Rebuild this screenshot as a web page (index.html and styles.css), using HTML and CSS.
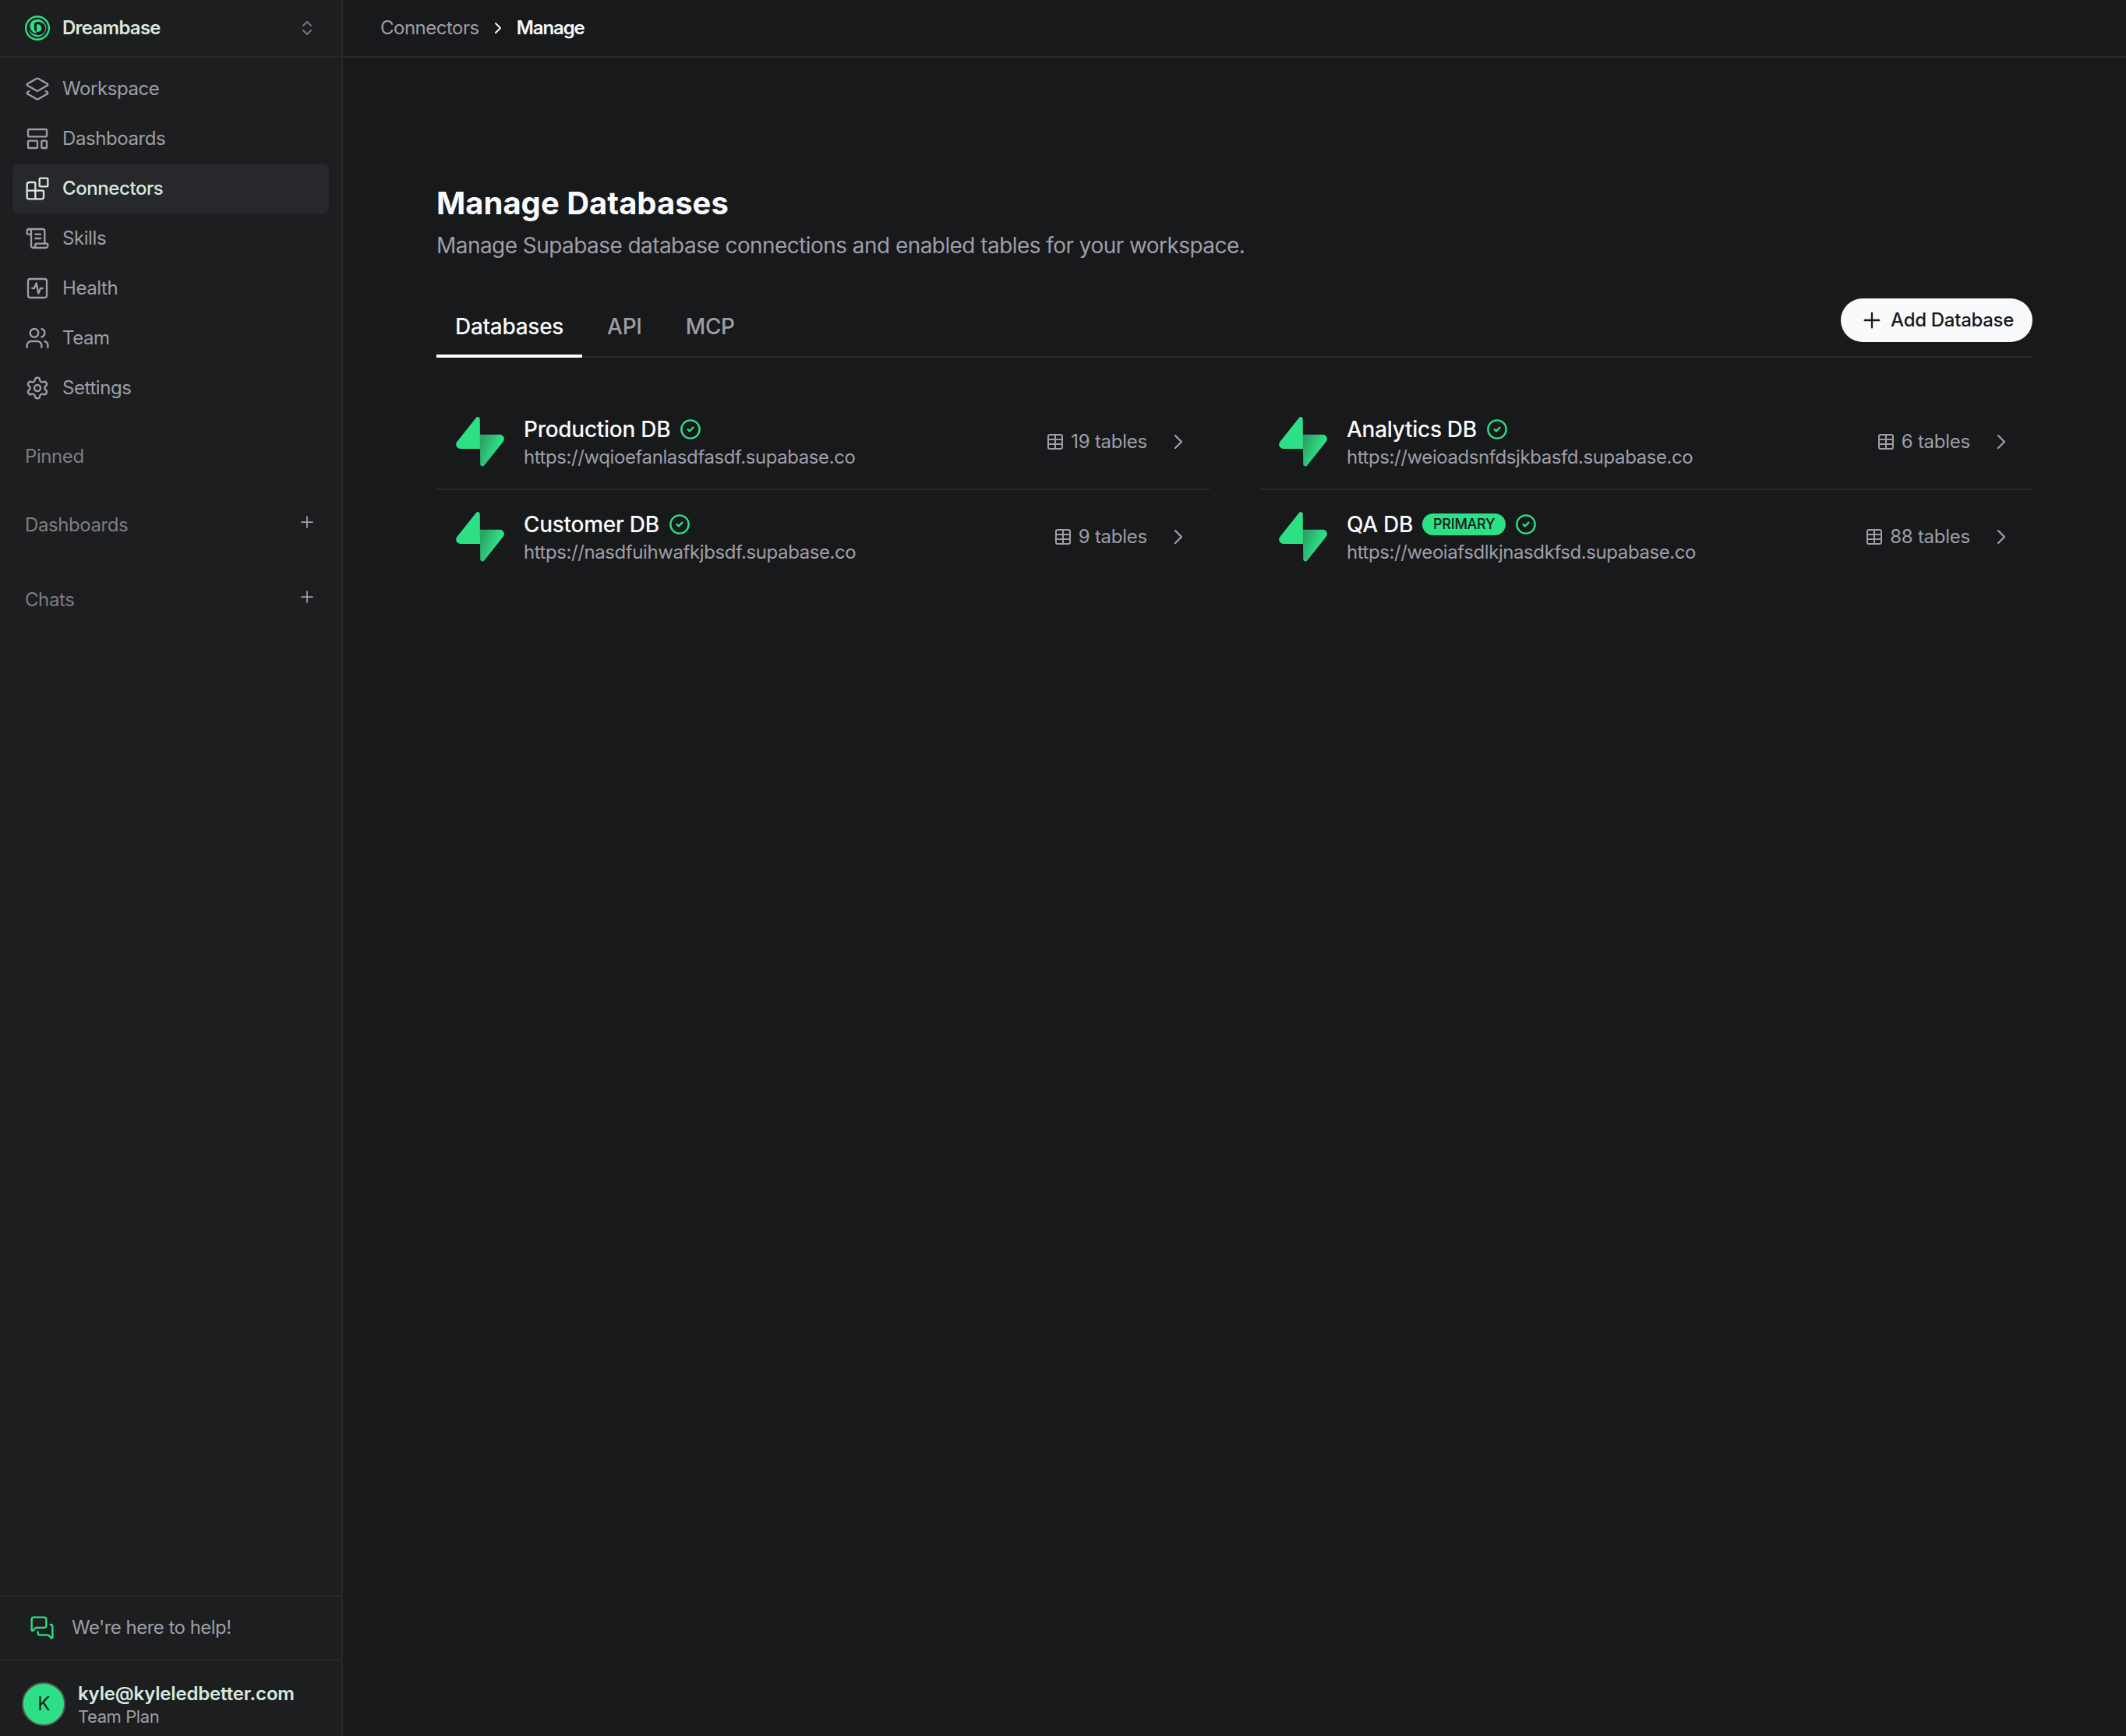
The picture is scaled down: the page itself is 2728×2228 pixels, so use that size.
FILE: index.html
```html
<!DOCTYPE html>
<html lang="en">
<head>
    <meta charset="UTF-8">
    <title>Dreambase - Manage Databases</title>
    <link rel="stylesheet" href="styles.css">
</head>
<body>
    <!-- shared icons -->
    <svg class="sprite" xmlns="http://www.w3.org/2000/svg">
        <symbol id="bolt" viewBox="0 0 109 113">
            <path d="M63.708 110.284c-2.86 3.601-8.658 1.628-8.727-2.97l-1.007-67.251h45.22c8.19 0 12.758 9.46 7.665 15.874l-43.151 54.347Z" fill="url(#bolt-shade)"/>
            <path d="M45.317 2.071c2.86-3.601 8.657-1.628 8.726 2.97l.442 67.251H9.83c-8.19 0-12.759-9.46-7.665-15.875L45.317 2.072Z" fill="#2ee085"/>
        </symbol>
        <linearGradient id="bolt-shade" x1="58" y1="58" x2="94" y2="73" gradientUnits="userSpaceOnUse">
            <stop offset="0" stop-color="#2ca567"/>
            <stop offset="1" stop-color="#2ee085"/>
        </linearGradient>
        <symbol id="check" viewBox="0 0 24 24"><circle cx="12" cy="12" r="10"/><path d="m9 12 2 2 4-4"/></symbol>
        <symbol id="table" viewBox="0 0 24 24"><path d="M12 3v18"/><rect width="18" height="18" x="3" y="3" rx="2"/><path d="M3 9h18M3 15h18"/></symbol>
        <symbol id="chevron" viewBox="0 0 24 24"><path d="m9 18 6-6-6-6"/></symbol>
        <symbol id="plus" viewBox="0 0 24 24"><path d="M5 12h14M12 5v14"/></symbol>
    </svg>

    <div class="app">
        <aside class="sidebar">
            <div class="workspace">
                <svg class="logo" viewBox="0 0 32 32">
                    <circle cx="16" cy="16" r="14.8" fill="none" stroke="#2ee085" stroke-width="2.4"/>
                    <path d="M5 17.5C6 23 10.5 27.2 16 27.2A11.2 11.2 0 1 0 8.2 8A9.5 9.5 0 0 0 14.5 22.8V20.8C12.5 20 12 18.5 12 16.5V10.5C13.5 8.3 15.500 7.8 17 8A8.600 8.600 0 1 1 15 24.700C10.500 24.500 7 21.500 5 17.500Z" fill="#2ee085"/>
                    <path d="M15 11.2H16.5A4.9 4.9 0 0 1 16.5 21H15Z" fill="#2ee085"/>
                </svg>
                <span class="workspace-name">Dreambase</span>
                <svg class="icon sm bold updown" viewBox="0 0 24 24"><path d="m7 15 5 5 5-5"/><path d="m7 9 5-5 5 5"/></svg>
            </div>
            <nav class="nav">
                <a class="nav-item">
                    <svg class="icon" viewBox="0 0 24 24"><path d="M13 13.74a2 2 0 0 1-2 0L2.5 8.87a1 1 0 0 1 0-1.74L11 2.26a2 2 0 0 1 2 0l8.5 4.87a1 1 0 0 1 0 1.74z"/><path d="m20 14.285 1.5.845a1 1 0 0 1 0 1.74L13 21.74a2 2 0 0 1-2 0l-8.5-4.87a1 1 0 0 1 0-1.74l1.5-.845"/></svg>
                    <span>Workspace</span>
                </a>
                <a class="nav-item">
                    <svg class="icon" viewBox="0 0 24 24"><rect width="18" height="7" x="3" y="3" rx="1"/><rect width="9" height="7" x="3" y="14" rx="1"/><rect width="5" height="7" x="16" y="14" rx="1"/></svg>
                    <span>Dashboards</span>
                </a>
                <a class="nav-item active">
                    <svg class="icon" viewBox="0 0 24 24"><path d="M10 22V7a1 1 0 0 0-1-1H4a2 2 0 0 0-2 2v12a2 2 0 0 0 2 2h12a2 2 0 0 0 2-2v-5a1 1 0 0 0-1-1H2"/><rect x="14" y="2" width="8" height="8" rx="1"/></svg>
                    <span>Connectors</span>
                </a>
                <a class="nav-item">
                    <svg class="icon" viewBox="0 0 24 24"><path d="M15 12h-5"/><path d="M15 8h-5"/><path d="M19 17V5a2 2 0 0 0-2-2H4"/><path d="M8 21h12a2 2 0 0 0 2-2v-1a1 1 0 0 0-1-1H11a1 1 0 0 0-1 1v1a2 2 0 1 1-4 0V5a2 2 0 1 0-4 0v2a1 1 0 0 0 1 1h3"/></svg>
                    <span>Skills</span>
                </a>
                <a class="nav-item">
                    <svg class="icon" viewBox="0 0 24 24"><rect width="18" height="18" x="3" y="3" rx="2"/><path d="M17 12h-2l-2 5-2-10-2 5H7"/></svg>
                    <span>Health</span>
                </a>
                <a class="nav-item">
                    <svg class="icon" viewBox="0 0 24 24"><path d="M16 21v-2a4 4 0 0 0-4-4H6a4 4 0 0 0-4 4v2"/><path d="M16 3.128a4 4 0 0 1 0 7.744"/><path d="M22 21v-2a4 4 0 0 0-3-3.87"/><circle cx="9" cy="7" r="4"/></svg>
                    <span>Team</span>
                </a>
                <a class="nav-item">
                    <svg class="icon" viewBox="0 0 24 24"><path d="M9.671 4.136a2.34 2.34 0 0 1 4.659 0 2.34 2.34 0 0 0 3.319 1.915 2.34 2.34 0 0 1 2.33 4.033 2.34 2.34 0 0 0 0 3.831 2.34 2.34 0 0 1-2.33 4.033 2.34 2.34 0 0 0-3.319 1.915 2.34 2.34 0 0 1-4.659 0 2.34 2.34 0 0 0-3.32-1.915 2.34 2.34 0 0 1-2.33-4.033 2.34 2.34 0 0 0 0-3.831A2.34 2.34 0 0 1 6.35 6.051a2.34 2.34 0 0 0 3.319-1.915"/><circle cx="12" cy="12" r="3"/></svg>
                    <span>Settings</span>
                </a>
            </nav>
            <div class="group"><span>Pinned</span></div>
            <div class="group with-add"><span>Dashboards</span><svg class="icon sm"><use href="#plus"/></svg></div>
            <div class="group with-add"><span>Chats</span><svg class="icon sm"><use href="#plus"/></svg></div>

            <div class="help">
                <svg class="icon" viewBox="0 0 24 24"><path d="M16 10a2 2 0 0 1-2 2H6.828a2 2 0 0 0-1.414.586l-2.202 2.202A.71.71 0 0 1 2 14.286V4a2 2 0 0 1 2-2h10a2 2 0 0 1 2 2z"/><path d="M20 9a2 2 0 0 1 2 2v10.286a.71.71 0 0 1-1.212.502l-2.202-2.202A2 2 0 0 0 17.172 19H10a2 2 0 0 1-2-2v-1"/></svg>
                <span>We're here to help!</span>
            </div>
            <div class="account">
                <div class="avatar">K</div>
                <div class="account-info">
                    <span class="email">kyle@kyleledbetter.com</span>
                    <span class="plan">Team Plan</span>
                </div>
            </div>
        </aside>

        <div class="page">
            <header class="topbar">
                <span class="crumb">Connectors</span>
                <svg class="icon sm bold"><use href="#chevron"/></svg>
                <span class="crumb current">Manage</span>
            </header>
            <main class="content">
                <h1>Manage Databases</h1>
                <p class="subtitle">Manage Supabase database connections and enabled tables for your workspace.</p>
                <div class="tabs">
                    <a class="tab active">Databases</a>
                    <a class="tab">API</a>
                    <a class="tab">MCP</a>
                    <button class="add"><svg class="icon"><use href="#plus"/></svg><span>Add Database</span></button>
                </div>
                <div class="databases">
                    <div class="db">
                        <svg class="bolt"><use href="#bolt"/></svg>
                        <div class="db-info">
                            <div class="db-title"><span class="name">Production DB</span><svg class="icon status"><use href="#check"/></svg></div>
                            <span class="url">https://wqioefanlasdfasdf.supabase.co</span>
                        </div>
                        <div class="count"><svg class="icon sm bold"><use href="#table"/></svg><span>19 tables</span></div>
                        <svg class="icon"><use href="#chevron"/></svg>
                    </div>
                    <div class="db">
                        <svg class="bolt"><use href="#bolt"/></svg>
                        <div class="db-info">
                            <div class="db-title"><span class="name">Analytics DB</span><svg class="icon status"><use href="#check"/></svg></div>
                            <span class="url">https://weioadsnfdsjkbasfd.supabase.co</span>
                        </div>
                        <div class="count"><svg class="icon sm bold"><use href="#table"/></svg><span>6 tables</span></div>
                        <svg class="icon"><use href="#chevron"/></svg>
                    </div>
                    <div class="db">
                        <svg class="bolt"><use href="#bolt"/></svg>
                        <div class="db-info">
                            <div class="db-title"><span class="name">Customer DB</span><svg class="icon status"><use href="#check"/></svg></div>
                            <span class="url">https://nasdfuihwafkjbsdf.supabase.co</span>
                        </div>
                        <div class="count"><svg class="icon sm bold"><use href="#table"/></svg><span>9 tables</span></div>
                        <svg class="icon"><use href="#chevron"/></svg>
                    </div>
                    <div class="db">
                        <svg class="bolt"><use href="#bolt"/></svg>
                        <div class="db-info">
                            <div class="db-title"><span class="name">QA DB</span><span class="badge">PRIMARY</span><svg class="icon status"><use href="#check"/></svg></div>
                            <span class="url">https://weoiafsdlkjnasdkfsd.supabase.co</span>
                        </div>
                        <div class="count"><svg class="icon sm bold"><use href="#table"/></svg><span>88 tables</span></div>
                        <svg class="icon"><use href="#chevron"/></svg>
                    </div>
                </div>
            </main>
        </div>
    </div>
</body>
</html>
```
FILE: styles.css
```css
* { box-sizing: border-box; }
body { margin: 0; font-family: Inter, sans-serif; font-size: 24px; line-height: 32px; letter-spacing: -0.42px; background: #18191b; color: #9e9ea8; }
h1, p { margin: 0; }
.sprite { position: absolute; width: 0; height: 0; }
.app { display: flex; height: 2228px; }

.icon { width: 32px; height: 32px; flex: none; fill: none; stroke: currentColor; stroke-width: 1.75; stroke-linecap: round; stroke-linejoin: round; }
.icon.sm { width: 24px; height: 24px; }
.icon.bold { stroke-width: 2; }

/* sidebar */
.sidebar { width: 440px; flex: none; display: flex; flex-direction: column; background: #1d1e20; border-right: 2px solid #27282a; }
.workspace { height: 74px; padding: 0 32px; display: flex; align-items: center; gap: 16px; border-bottom: 2px solid #27282a; }
.logo { width: 32px; height: 32px; }
.workspace-name { flex: 1; font-weight: 600; letter-spacing: -0.75px; color: #d8e8df; }
.updown { color: #77777d; }
.nav { padding: 8px 16px 0; }
.nav-item { height: 64px; padding: 0 16px; display: flex; align-items: center; gap: 16px; border-radius: 8px; }
.nav-item.active { background: #27282b; color: #d8e8df; font-weight: 500; }
.group { height: 64px; margin-top: 24px; padding: 0 32px; display: flex; align-items: center; justify-content: space-between; color: #7d7d84; }
.group .icon { color: #a0a0a8; margin-bottom: 8px; }
.group.with-add + .with-add { margin-top: 32px; }
.help { height: 84px; margin-top: auto; padding: 0 38px; display: flex; align-items: center; gap: 22px; border-top: 2px solid #27282a; border-bottom: 2px solid #27282a; letter-spacing: -0.52px; }
.help .icon { color: #2ee085; }
.account { height: 97px; padding: 15px 28px 0; display: flex; align-items: center; gap: 16px; }
.avatar { width: 56px; height: 56px; border: 2px solid #555a58; border-radius: 50%; background: #2ee085; color: #18191b; line-height: 52px; text-align: center; }
.account-info { display: flex; flex-direction: column; padding-top: 1px; }
.email { font-weight: 600; letter-spacing: -0.17px; color: #d8e8df; line-height: 30px; }
.plan { font-size: 22px; line-height: 28px; }

/* page */
.page { flex: 1; }
.topbar { height: 74px; padding: 0 48px; display: flex; align-items: center; gap: 12px; border-bottom: 2px solid #27282a; letter-spacing: -0.5px; }
.topbar .icon { color: #f4f5f6; }
.crumb.current { font-weight: 600; letter-spacing: -1.1px; color: #f9fafb; }
.content { padding: 161px 120px 0; }
h1 { font-size: 40px; line-height: 52px; font-weight: 700; letter-spacing: 0; color: #f9fafb; }
.subtitle { font-size: 28px; line-height: 56px; letter-spacing: -0.56px; }
.tabs { height: 80px; margin-top: 36px; padding-bottom: 0; display: flex; gap: 8px; border-bottom: 2px solid #27282a; letter-spacing: -0.3px; }
.tab { height: 80px; padding: 24px 24px 0; font-size: 28px; font-weight: 500; }
.tab.active { color: #f9fafb; border-bottom: 4px solid #fff; }
.add { height: 56px; margin-left: auto; margin-top: 4px; padding: 0 24px; display: flex; align-items: center; gap: 8px; border: 0; border-radius: 28px; background: #f9fafb; color: #18191b; font: 500 24px/32px Inter, sans-serif; letter-spacing: -0.3px; }
.databases { margin-top: 48px; display: grid; grid-template-columns: 1fr 1fr; column-gap: 64px; }
.db { height: 122px; padding: 0 24px; display: flex; align-items: center; border-bottom: 2px solid #27282a; }
.db:nth-last-child(-n+2) { border-bottom-color: transparent; }
.bolt { width: 64px; height: 64px; margin-right: 24px; }
.db-info { flex: 1; padding-top: 1px; }
.db-title { height: 38px; display: flex; align-items: center; gap: 12px; }
.name { font-size: 28px; font-weight: 500; letter-spacing: -0.28px; color: #f9fafb; }
.status { width: 28px; height: 28px; stroke-width: 2; color: #2ee085; }
.url { display: block; line-height: 33px; }
.badge { height: 28px; padding: 0 14px; border-radius: 14px; background: #2ee085; color: #18191b; font-size: 18px; line-height: 28px; font-weight: 500; letter-spacing: -0.25px; }
.count { display: flex; align-items: center; gap: 8px; margin-right: 24px; letter-spacing: -0.25px; }
```
